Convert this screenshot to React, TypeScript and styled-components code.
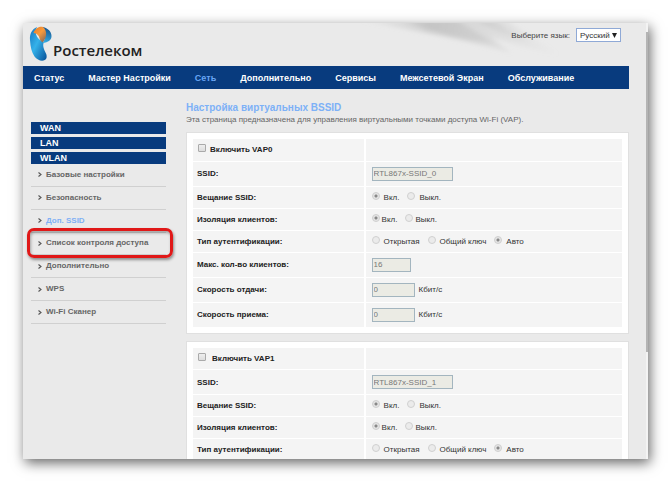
import React from "react";
import styled, { createGlobalStyle } from "styled-components";

const Global = createGlobalStyle`
  * { box-sizing: border-box; }
  body {
    margin: 0;
    background: #fff;
    font-family: "Liberation Sans", Arial, sans-serif;
    font-size: 8px;
    color: #333;
  }
`;

const Stage = styled.div`
  display: flex;
  height: 100vh;
  padding: 23px 22px 23px 23px;
  overflow: hidden;
`;

const Window = styled.div`
  flex: 1;
  display: flex;
  min-width: 0;
  overflow: hidden;
  background: #eaeaea;
  box-shadow: 2px 4px 12px rgba(0, 0, 0, 0.6);
`;

const Page = styled.div`
  flex: 1;
  min-width: 0;
  padding-right: 17px;
`;

const ScrollTrack = styled.div`
  width: 2px;
  padding-top: 9px;
  background: #f3f3f3;
`;

const ScrollThumb = styled.div`
  height: 75%;
  background: #b4b4b4;
`;

const Header = styled.header`
  position: relative;
  display: flex;
  justify-content: space-between;
  align-items: flex-start;
  height: 43px;
`;

const Swoosh = styled.svg`
  position: absolute;
  top: 0;
  left: 50%;
  width: 250px;
  height: 43px;
`;

const Brand = styled.a`
  display: flex;
  align-items: flex-start;
  gap: 1px;
  padding: 3px 0 0 6px;
  color: #222;
  text-decoration: none;
`;

const BrandName = styled.span`
  padding-top: 14px;
  font: 600 15px/20px "Open Sans", "Noto Sans", sans-serif;
`;

const Language = styled.label`
  position: relative;
  display: flex;
  align-items: center;
  gap: 6px;
  padding: 5px 8px 0 0;
  color: #444;
`;

const LanguageSelect = styled.select`
  appearance: none;
  width: 45px;
  height: 14px;
  padding: 0 3px;
  border: 1px solid #8fa9d6;
  border-radius: 0;
  background: #fff
    url("data:image/svg+xml,%3Csvg xmlns='http://www.w3.org/2000/svg' width='5' height='5'%3E%3Cpath d='M0 0h5L2.5 5z' fill='%23222'/%3E%3C/svg%3E")
    no-repeat right 3px center;
  color: #333;
  font: 8px "Liberation Sans", Arial, sans-serif;
`;

const Nav = styled.nav`
  display: flex;
  align-items: center;
  gap: 24px;
  height: 23px;
  padding-left: 11px;
  background: #083b7e;
`;

const NavLink = styled.a<{ $active?: boolean }>`
  color: ${(p) => (p.$active ? "#68a6f5" : "#fff")};
  font-size: 9px;
  font-weight: bold;
  line-height: 12px;
  white-space: nowrap;
  text-decoration: none;
`;

const Body = styled.div`
  display: grid;
  grid-template-columns: 163px 1fr;
`;

const Sidebar = styled.aside`
  padding: 33px 20px 0 8px;
`;

const SideHeads = styled.div`
  display: grid;
  gap: 3px;
`;

const SideHead = styled.a`
  height: 12px;
  padding-left: 9px;
  background: #083b7e;
  color: #fff;
  font-size: 9px;
  font-weight: bold;
  line-height: 12px;
  text-decoration: none;
`;

const SideList = styled.ul`
  display: grid;
  grid-auto-rows: 1fr;
  height: 160px;
  margin: 0;
  padding: 0;
  list-style: none;
`;

const SideItem = styled.li`
  position: relative;
  display: flex;
  align-items: center;
  border-bottom: 1px solid #d0d0d0;
`;

const SideLink = styled.a<{ $active?: boolean }>`
  display: flex;
  align-items: center;
  gap: 4px;
  padding-left: 7px;
  color: ${(p) => (p.$active ? "#7fb0f5" : "#666")};
  font-weight: bold;
  font-size: 8px;
  line-height: 10px;
  white-space: nowrap;
  text-decoration: none;
`;

const Highlight = styled.span`
  position: absolute;
  inset: -5px -7px -4px -4px;
  border: 3px solid #e01818;
  border-radius: 7px;
  box-shadow: 1px 2px 3px rgba(0, 0, 0, 0.4), inset 1px 2px 3px rgba(0, 0, 0, 0.3);
  pointer-events: none;
`;

const Main = styled.main`
  min-width: 0;
  padding-top: 12px;
`;

const Title = styled.h1`
  margin: 0;
  color: #7db1f7;
  font-size: 10px;
  line-height: 13px;
`;

const Intro = styled.p`
  margin: 0 0 6px;
  color: #666;
  line-height: 12px;
  white-space: nowrap;
`;

const Panel = styled.form`
  margin-bottom: 7px;
  padding: 6px 6px 5px;
  border: 1px solid #e0e0e0;
  background: #fff;
`;

const Table = styled.table`
  width: 100%;
  table-layout: fixed;
  border-collapse: collapse;
`;

const Row = styled.tr<{ $tall?: boolean }>`
  height: ${(p) => (p.$tall ? 25 : 22)}px;
  & > * {
    border-bottom: 1px solid #fff;
  }
`;

const Head = styled.th`
  width: 40%;
  padding: 0 4px;
  border-right: 2px solid #fff;
  background: #f4f4f4;
  color: #222;
  text-align: left;
`;

const Cell = styled.td`
  padding: 0 6px;
  background: #f4f4f4;
`;

const Line = styled.div<{ $gap?: number }>`
  display: flex;
  align-items: center;
  gap: ${(p) => p.$gap ?? 8}px;
`;

const Choice = styled.label<{ $gap: number }>`
  display: flex;
  align-items: center;
  gap: ${(p) => p.$gap}px;
  white-space: nowrap;
`;

const Check = styled.input`
  appearance: none;
  width: 8px;
  height: 8px;
  margin: 0 0 3px 1px;
  border: 1px solid #aaa;
  border-radius: 1px;
  background: linear-gradient(#eee, #ddd);
`;

const Radio = styled.input`
  appearance: none;
  width: 8px;
  height: 8px;
  margin: 0 0 3px;
  border: 1px solid #d0d0d0;
  border-radius: 50%;
  background: #ebebeb;
  &:checked {
    background: radial-gradient(circle, #888 0 1px, #e4e4e4 2px);
  }
`;

const TextBox = styled.input<{ $width: number }>`
  width: ${(p) => p.$width}px;
  height: 14px;
  padding: 0 1px;
  border: 1px solid #a3b5bf;
  border-radius: 0;
  background: #ebebe4;
  color: #777;
  font: 8px "Liberation Sans", Arial, sans-serif;
`;

const navItems = ["Статус", "Мастер Настройки", "Сеть", "Дополнительно", "Сервисы", "Межсетевой Экран", "Обслуживание"];
const sideItems = ["Базовые настройки", "Безопасность", "Доп. SSID", "Список контроля доступа", "Дополнительно", "WPS", "Wi-Fi Сканер"];

const Logo = () => (
  <svg width="23" height="36" viewBox="0 0 23 36" aria-hidden="true">
    <defs>
      <linearGradient id="blue" x1="0" y1="0" x2="1" y2="1">
        <stop offset="0" stopColor="#1673bd" />
        <stop offset="0.45" stopColor="#35b2ea" />
        <stop offset="1" stopColor="#075097" />
      </linearGradient>
      <linearGradient id="orange" x1="0" y1="0" x2="0.8" y2="1">
        <stop offset="0" stopColor="#e97b22" />
        <stop offset="0.5" stopColor="#f79a3c" />
        <stop offset="1" stopColor="#8a6a58" />
      </linearGradient>
      <linearGradient id="curl" x1="0.6" y1="0" x2="0.4" y2="1">
        <stop offset="0" stopColor="#14508c" />
        <stop offset="1" stopColor="#35ade4" />
      </linearGradient>
    </defs>
    <path d="M8 1C3 3 .5 8 1 14c.5 7 1.500 12 4.500 16.500C9 35.500 16 36 17.500 32c1-4-2-6-3-10.500-.5-2-.3-3.500.3-5.500C9 14 4.500 8 8 1z" fill="url(#blue)" />
    <path d="M13 1c5.500.5 9.500 4.500 9.500 9 0 4-3 6.500-9 7 1.500-2.500 3-4.500 2.500-8C15.700 6 15 3.500 13 1z" fill="url(#curl)" />
    <path d="M4.500 7C6 2.500 10 0 14 1c2.500 2 3.500 5 3 8.500-.4 3-2 5.500-3.500 7C11.500 15 10.500 13 10 10.500 8.500 8 6.500 7 4.500 7z" fill="url(#orange)" />
  </svg>
);

const Chevron = () => (
  <svg width="4" height="5" viewBox="0 0 4 5" aria-hidden="true">
    <path d="M.5.5l2.500 2-2.500 2" fill="none" stroke="#555" strokeWidth="1.100" />
  </svg>
);

type RadioSetProps = { name: string; options: string[]; checked: number; gap?: number };

const RadioSet = ({ name, options, checked, gap = 4 }: RadioSetProps) => (
  <Line>
    {options.map((o, i) => (
      <Choice key={o} $gap={gap}>
        <Radio type="radio" name={name} defaultChecked={i === checked} disabled />
        {o}
      </Choice>
    ))}
  </Line>
);

type VapPanelProps = { index: number; checkGap: number; limits?: boolean };

const VapPanel = ({ index, checkGap, limits }: VapPanelProps) => {
  const id = (s: string) => `vap${index}-${s}`;
  return (
    <Panel>
      <Table>
        <tbody>
          <Row>
            <Head scope="row">
              <Choice $gap={checkGap}>
                <Check type="checkbox" />
                Включить VAP{index}
              </Choice>
            </Head>
            <Cell />
          </Row>
          <Row $tall>
            <Head scope="row"><label htmlFor={id("ssid")}>SSID:</label></Head>
            <Cell><Line><TextBox id={id("ssid")} $width={81} defaultValue={`RTL867x-SSID_${index}`} disabled /></Line></Cell>
          </Row>
          <Row>
            <Head scope="row">Вещание SSID:</Head>
            <Cell><RadioSet name={id("cast")} options={["Вкл.", "Выкл."]} checked={0} /></Cell>
          </Row>
          <Row>
            <Head scope="row">Изоляция клиентов:</Head>
            <Cell><RadioSet name={id("iso")} options={["Вкл.", "Выкл."]} checked={0} gap={2} /></Cell>
          </Row>
          <Row>
            <Head scope="row">Тип аутентификации:</Head>
            <Cell><RadioSet name={id("auth")} options={["Открытая", "Общий ключ", "Авто"]} checked={2} /></Cell>
          </Row>
          {limits && (
            <>
              <Row $tall>
                <Head scope="row"><label htmlFor={id("max")}>Макс. кол-во клиентов:</label></Head>
                <Cell><Line><TextBox id={id("max")} $width={39} defaultValue="16" disabled /></Line></Cell>
              </Row>
              <Row $tall>
                <Head scope="row"><label htmlFor={id("up")}>Скорость отдачи:</label></Head>
                <Cell><Line $gap={4}><TextBox id={id("up")} $width={43} defaultValue="0" disabled />Кбит/с</Line></Cell>
              </Row>
              <Row $tall>
                <Head scope="row"><label htmlFor={id("down")}>Скорость приема:</label></Head>
                <Cell><Line $gap={4}><TextBox id={id("down")} $width={43} defaultValue="0" disabled />Кбит/с</Line></Cell>
              </Row>
            </>
          )}
        </tbody>
      </Table>
    </Panel>
  );
};

export default function App() {
  return (
    <>
      <Global />
      <Stage>
        <Window>
          <Page>
            <Header>
              <Swoosh viewBox="0 0 250 43" aria-hidden="true">
                <defs>
                  <linearGradient id="streak" gradientUnits="userSpaceOnUse" x1="30" y1="0" x2="235" y2="34">
                    <stop offset="0" stopColor="#bbb" stopOpacity="0" />
                    <stop offset="0.35" stopColor="#b4b4b4" stopOpacity="0.45" />
                    <stop offset="0.6" stopColor="#bcbcbc" stopOpacity="0.35" />
                    <stop offset="1" stopColor="#ccc" stopOpacity="0" />
                  </linearGradient>
                  <filter id="soft"><feGaussianBlur stdDeviation="2" /></filter>
                </defs>
                <g fill="url(#streak)" filter="url(#soft)">
                  <path d="M30 -3h150l55 36Q190 22 165 14l20 16Q130 14 30 -3z" />
                  <path d="M75 -3h55l40 24Q120 14 75 -3z" />
                  <path d="M150 -3h18l38 24Q175 12 150 -3z" />
                </g>
              </Swoosh>
              <Brand href="#">
                <Logo />
                <BrandName>Ростелеком</BrandName>
              </Brand>
              <Language>
                Выберите язык:
                <LanguageSelect defaultValue="ru">
                  <option value="ru">Русский</option>
                </LanguageSelect>
              </Language>
            </Header>
            <Nav>
              {navItems.map((t) => (
                <NavLink key={t} href="#" $active={t === "Сеть"}>{t}</NavLink>
              ))}
            </Nav>
            <Body>
              <Sidebar>
                <SideHeads>
                  {["WAN", "LAN", "WLAN"].map((t) => <SideHead key={t} href="#">{t}</SideHead>)}
                </SideHeads>
                <SideList>
                  {sideItems.map((t) => (
                    <SideItem key={t}>
                      <SideLink href="#" $active={t === "Доп. SSID"}><Chevron />{t}</SideLink>
                      {t === "Список контроля доступа" && <Highlight />}
                    </SideItem>
                  ))}
                </SideList>
              </Sidebar>
              <Main>
                <Title>Настройка виртуальных BSSID</Title>
                <Intro>Эта страница предназначена для управления виртуальными точками доступа Wi-Fi (VAP).</Intro>
                <VapPanel index={0} checkGap={4} limits />
                <VapPanel index={1} checkGap={6} />
              </Main>
            </Body>
          </Page>
          <ScrollTrack><ScrollThumb /></ScrollTrack>
        </Window>
      </Stage>
    </>
  );
}
